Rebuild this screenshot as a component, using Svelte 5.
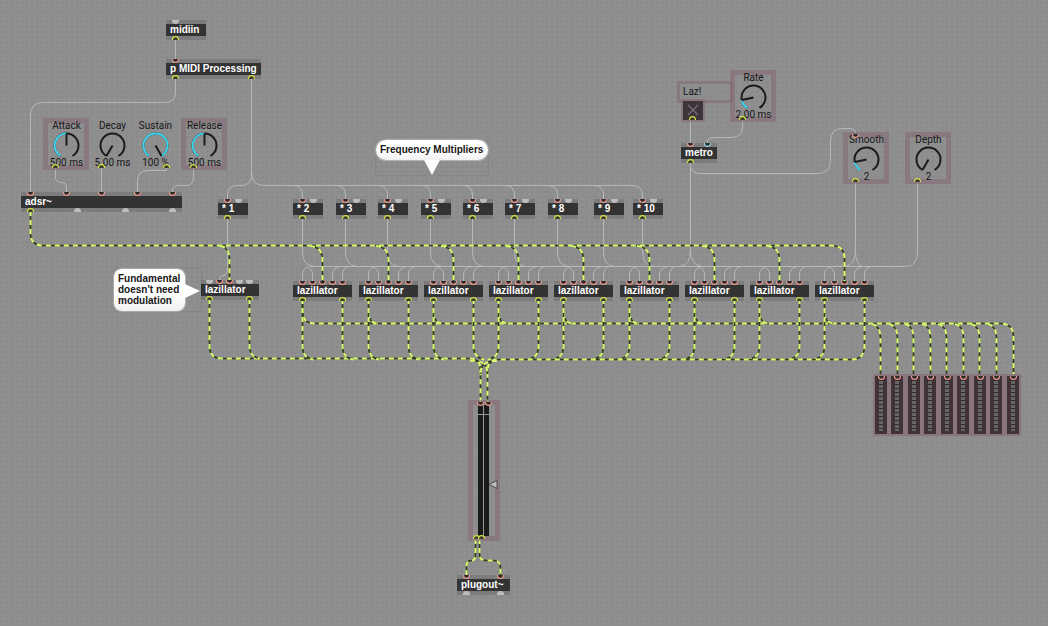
<script>
  const lazX = [293, 359, 424, 489, 554, 620, 685, 750, 815];
  const mults = [
    { x: 218, n: 1 }, { x: 293, n: 2 }, { x: 336, n: 3 }, { x: 378, n: 4 }, { x: 421, n: 5 },
    { x: 463, n: 6 }, { x: 505, n: 7 }, { x: 548, n: 8 }, { x: 594, n: 9 }, { x: 633, n: 10 }
  ];

  // Port kinds: r = hot inlet, b = cold inlet, g = unused, y = outlet in use
  const objects = [
    { label: 'midiin', x: 166, y: 20, w: 40, ins: [[9, 'g']], outs: [[9, 'y']] },
    { label: 'p MIDI Processing', x: 166, y: 59, w: 95, ins: [[9, 'r']], outs: [[9, 'y'], [85, 'y']] },
    { label: 'adsr~', x: 21, y: 192, w: 161,
      ins: [[9, 'r'], [45, 'r'], [80, 'r'], [116, 'r'], [151, 'r']],
      outs: [[9, 'y'], [56, 'g'], [104, 'g'], [151, 'g']] },
    ...mults.map((m) => ({ label: `* ${m.n}`, x: m.x, y: 199, w: 30, ins: [[9, 'r'], [20, 'g']], outs: [[9, 'y']] })),
    { label: 'lazillator', x: 201, y: 280, w: 58,
      ins: [[8, 'g'], [18, 'r'], [28, 'r'], [38, 'g'], [48, 'g']], outs: [[8, 'y'], [48, 'y']] },
    ...lazX.map((x) => ({ label: 'lazillator', x, y: 281, w: 59,
      ins: [9, 19, 29, 39, 49].map((d) => [d, 'r']), outs: [[9, 'y'], [49, 'y']] })),
    { label: 'metro', x: 681, y: 143, w: 36, ins: [[9, 'r'], [26, 'b']], outs: [[9, 'y']] },
    { label: 'plugout~', x: 457, y: 575, w: 53, ins: [[9, 'r'], [43, 'r']], outs: [[9, 'g'], [43, 'g']] }
  ];

  const dials = [
    { name: 'Attack', value: '500 ms', x: 43, y: 118, framed: true, angle: 0, port: 12 },
    { name: 'Decay', value: '5.00 ms', x: 89, y: 118, framed: false, angle: -150, port: 12 },
    { name: 'Sustain', value: '100 %', x: 132, y: 118, framed: false, angle: 150, port: 34 },
    { name: 'Release', value: '500 ms', x: 181, y: 118, framed: true, angle: 0, port: 12 },
    { name: 'Rate', value: '2.00 ms', x: 730, y: 70, framed: true, angle: -102, port: 12 },
    { name: 'Smooth', value: '2', x: 843, y: 132, framed: true, angle: -102, port: 12 },
    { name: 'Depth', value: '2', x: 905, y: 132, framed: true, angle: -150, port: 12 }
  ];

  const meters = [875, 891, 908, 924, 941, 957, 974, 990, 1007];
  const meterWire = [880, 897, 913, 930, 946, 963, 979, 996, 1013];

  function polar(angle, r) {
    const a = (angle * Math.PI) / 180;
    return [23.5 + r * Math.sin(a), 27.5 - r * Math.cos(a)];
  }
  function arc(from, to) {
    const [x1, y1] = polar(from, 12);
    const [x2, y2] = polar(to, 12);
    return `M${x1} ${y1}A12 12 0 ${to - from > 180 ? 1 : 0} 1 ${x2} ${y2}`;
  }

  const control = [
    'M175.5 39V60',
    'M175.5 77V92Q175.5 102.500 165 102.500H43Q30.500 102.500 30.500 115V193',
    'M251.500 77V175Q251.500 185.500 241 185.500H238Q227.500 185.500 227.500 194V200',
    'M251.500 172Q251.500 185.500 264 185.500H632Q642.500 185.500 642.500 195V200',
    'M55.500 168V177Q55.500 182.500 61 182.500Q66.500 182.500 66.500 188V193',
    'M101.500 168V193',
    'M166.500 168V170.500H149Q137.500 170.500 137.500 181V193',
    'M193.500 168V177Q193.500 185.500 186 185.500H178Q172.500 185.500 172.500 190V193',
    'M227.500 217V268Q227.500 275.500 223 275.500Q219.500 275.500 219.500 281',
    ...mults.slice(1, 9).map((m) => `M${m.x} 185.500Q${m.x + 9.5} 185.500 ${m.x + 9.5} 195V200`),
    ...mults.slice(1).map((m) => `M${m.x + 9.5} 217V252Q${m.x + 9.5} 265.500 ${m.x + 21} 266.500`),
    'M310 266.500H905Q917.500 266.500 917.500 252V182',
    'M690.500 160V250Q690.500 265 702 266.500',
    'M690.500 250Q690.500 265 680 266.500',
    'M690.500 166Q691 173.500 700 173.500H818Q830.500 173.500 830.500 160V141Q830.500 128.500 843 128.500H850Q855.500 128.500 855.500 134',
    'M855.500 182V250Q855.500 265 845 266.500',
    'M855.500 250Q855.500 265 862 266.500',
    'M690.500 121V144',
    'M742.500 120V127Q742.500 137.500 731 137.500H715Q707.500 137.500 707.500 141V144',
    ...lazX.flatMap((x) => [
      `M${x + 9.5} 282V275Q${x + 9.5} 268.500 ${x + 14.5} 267.500`,
      `M${x + 19.5} 282V275Q${x + 19.5} 268.500 ${x + 14.5} 267.500`,
      `M${x + 39.5} 282V275Q${x + 39.5} 267.500 ${x + 48} 266.500`,
      `M${x + 49.5} 282V275Q${x + 49.5} 267.500 ${x + 56} 266.500`
    ])
  ];

  const signal = [
    'M30.500 211V233Q30.500 245.500 43 245.500H831Q844.500 245.500 844.500 259V283',
    'M220 246Q229.500 247 229.500 260V282',
    ...lazX.slice(0, 8).map((x) => `M${x + 17} 246Q${x + 29.5} 247 ${x + 29.5} 260V283`),
    'M302.500 299V311Q302.500 323.500 315 323.500H1000Q1013.500 323.500 1013.500 337V376',
    ...lazX.slice(1).map((x) => `M${x + 9.5} 313Q${x + 10} 322 ${x + 18} 323.500`),
    ...meterWire.slice(0, 8).map((x) => `M${x - 8} 324Q${x + 0.5} 326 ${x + 0.5} 338V376`),
    'M209.500 299V346Q209.500 358.500 222 358.500H470Q480.500 359 480.500 370V403',
    'M249.500 299V346Q249.500 357 260 358.500',
    ...lazX.flatMap((x) => [x + 9.5, x + 49.5]).slice(0, 17)
      .map((x) => `M${x} 299V346Q${x} 358 ${x + (x < 480 ? 11 : -11)} 359.500`),
    'M864.500 299V346Q864.500 359.500 851 359.500H498Q487.500 360 487.500 371V403',
    'M470 361Q487.500 359 487.500 374',
    'M497 361Q480.500 360 480.500 374',
    'M475.500 539V555Q475.500 560.500 471 560.500Q466.500 561 466.500 566V577',
    'M479.500 539V555Q479.500 560.500 487 560.500H494Q500.500 561 500.500 568V577'
  ];

  const ports = [
    ...objects.flatMap((o) => [
      ...o.ins.map(([d, k]) => ({ x: o.x + d + 0.5, y: o.y, k, dir: 'in' })),
      ...o.outs.map(([d, k]) => ({ x: o.x + d + 0.5, y: o.y + 20, k, dir: 'out' }))
    ]),
    ...dials.map((d) => ({ x: d.x + d.port + 0.5, y: d.y + 50, k: 'y', dir: 'out' })),
    { x: 692.5, y: 120, k: 'y', dir: 'out' },
    { x: 855.5, y: 134, k: 'r', dir: 'in' },
    { x: 480.5, y: 402, k: 'r', dir: 'in' },
    { x: 488.5, y: 402, k: 'r', dir: 'in' },
    { x: 476.5, y: 539, k: 'y', dir: 'out' },
    { x: 481.5, y: 539, k: 'y', dir: 'out' },
    ...meters.map((x) => ({ x: x + 6.5, y: 376, k: 'r', dir: 'in' }))
  ];

  function portPath(p) {
    const dy = p.dir === 'in' ? 1 : -1;
    return `M${p.x - 3} ${p.y}C${p.x - 3} ${p.y + dy * 4.4} ${p.x + 3} ${p.y + dy * 4.4} ${p.x + 3} ${p.y}`;
  }

  let armed = $state(true);
</script>

<main class="patcher">
  <svg class="layer" aria-hidden="true">
    {#each control as d}<path class="control" {d} />{/each}
    {#each signal as d}
      <path class="signal" {d} />
      <path class="signal-dash" {d} />
    {/each}
  </svg>

  {#each objects as o}
    <div class="object" style="left:{o.x}px;top:{o.y}px;width:{o.w}px"><span>{o.label}</span></div>
  {/each}

  {#each dials as d}
    <label class="dial" class:framed={d.framed} style="left:{d.x}px;top:{d.y}px">
      <span class="name">{d.name}</span>
      <span class="value">{d.value}</span>
      <svg class="knob" viewBox="0 0 46 52" aria-hidden="true">
        <path class="track" d={arc(-150, 150)} />
        {#if d.angle > -150}<path class="fill" d={arc(-150, d.angle)} />{/if}
        <path class="track" d="M23.5 27.5L{polar(d.angle, 12).join(' ')}" />
      </svg>
      <input type="range" min="-150" max="150" value={d.angle} />
    </label>
  {/each}

  <label class="laz" for="laz">Laz!</label>
  <div class="toggle">
    <input id="laz" type="checkbox" bind:checked={armed} />
    <svg viewBox="0 0 20 19" aria-hidden="true"><path d="M5 4L15 14M15 4L5 14" /></svg>
  </div>

  <div class="comment side">
    <p>Fundamental<br />doesn't need<br />modulation</p>
    <svg class="tail" viewBox="0 0 15 14" aria-hidden="true"><path d="M0 0L15 7L0 14Z" /></svg>
  </div>
  <div class="comment top">
    <p>Frequency Multipliers</p>
    <svg class="tail" viewBox="0 0 16 15" aria-hidden="true"><path d="M0 0H16L8 15Z" /></svg>
  </div>

  <div class="gain">
    <div class="bar"></div>
    <div class="bar"></div>
    <svg class="pointer" viewBox="0 0 10 9" aria-hidden="true"><path d="M9 0.500L1 4.500L9 8.500Z" /></svg>
    <input type="range" aria-label="Gain" value="40" />
  </div>

  <div class="meters">
    {#each meters as x}
      <div class="meter" style="left:{x - 873}px"></div>
    {/each}
  </div>

  <svg class="layer" aria-hidden="true">
    {#each ports as p}<path class="port {p.k}" d={portPath(p)} />{/each}
  </svg>
</main>

<style>
  :global(body) { margin: 0; background: #8e8e8e; }
  .patcher {
    position: relative;
    min-height: 100vh;
    overflow: hidden;
    background-color: #8f8f8f;
    background-image: radial-gradient(circle at 2px 2px, #808080 0, #8d8d8d 1px, transparent 2px);
    background-size: 5px 5px;
    font-family: "Liberation Sans", Arial, sans-serif;
    font-size: 10px;
    color: #161616;
  }
  .layer { position: absolute; inset: 0; width: 100%; height: 100%; pointer-events: none; fill: none; }
  .control { stroke: #b8b8b8; stroke-width: 1; }
  .signal { stroke: #343c1c; stroke-width: 1.6; }
  .signal-dash { stroke: #d8fb70; stroke-width: 2; stroke-dasharray: 5 4; }

  .object {
    position: absolute;
    box-sizing: border-box;
    border: solid #7c7c7c;
    border-width: 4px 0;
    background: #333;
    color: #fff;
    font-weight: bold;
    line-height: 12px;
    padding-left: 4px;
    white-space: pre;
  }
  .object span { display: block; }

  .port { stroke-width: 1.2; }
  .r { fill: #2b2b2b; stroke: #ee978b; }
  .b { fill: #2b2b2b; stroke: #8ed3e6; }
  .y { fill: #3c3c30; stroke: #d6e344; }
  .g { fill: #bdbdbd; stroke: #bdbdbd; }

  .dial { position: absolute; width: 46px; height: 52px; font-family: Roboto, sans-serif; }
  .framed::before {
    content: "";
    position: absolute;
    inset: 0;
    border: 5px solid rgba(135, 105, 118, 0.6);
  }
  .dial span { position: absolute; left: 1px; right: 0; line-height: 12px; text-align: center; white-space: nowrap; }
  .name { top: 2px; }
  .value { bottom: 1px; }
  .knob { position: absolute; inset: 0; fill: none; stroke-width: 2; }
  .track { stroke: #1a1a1a; }
  .fill { stroke: #3fd6f0; }
  input[type="range"] { position: absolute; inset: 0; width: 100%; height: 100%; margin: 0; opacity: 0; }

  .laz {
    position: absolute;
    left: 677px;
    top: 81px;
    width: 44px;
    padding: 1px 3px;
    border: 3px solid rgba(135, 105, 118, 0.6);
    font-family: Roboto, sans-serif;
    line-height: 14px;
  }
  .toggle { position: absolute; left: 683px; top: 101px; width: 20px; height: 19px; background: #3e3439; outline: 2px solid rgba(135, 105, 118, 0.6); }
  .toggle input { position: absolute; inset: 0; margin: 0; width: 100%; height: 100%; opacity: 0; }
  .toggle svg { display: block; fill: none; stroke: #77717a; stroke-width: 1.3; }

  .comment { position: absolute; font-weight: bold; outline: 1px solid rgba(0, 0, 0, 0.05); }
  .comment p { margin: 0; background: linear-gradient(#fff 60%, #f0f0f0); border-radius: 8px; box-shadow: 0 0 1px 1px rgba(225, 225, 225, 0.5); }
  .tail { position: absolute; fill: #fff; }
  .side { left: 114px; top: 269px; width: 87px; }
  .side p { width: 67px; padding: 4px 0 5px 4px; line-height: 11px; }
  .side .tail { left: 71px; top: 15px; width: 15px; }
  .top { left: 376px; top: 140px; width: 112px; height: 35px; }
  .top p { padding: 4px; line-height: 12px; border-radius: 10px; }
  .top .tail { left: 48px; top: 20px; width: 16px; }

  .gain {
    position: absolute;
    left: 468px;
    top: 400px;
    box-sizing: border-box;
    width: 32px;
    height: 141px;
    display: flex;
    gap: 1px;
    padding-left: 5px;
    border: 5px solid rgba(135, 105, 118, 0.6);
  }
  .bar { width: 5px; background: linear-gradient(#1a1a1a 9px, #999 9px, #999 10px, #1a1a1a 10px); box-shadow: 1px 0 #999; }
  .bar + .bar { box-shadow: none; }
  .pointer { position: absolute; left: 15px; top: 75px; width: 10px; fill: #bdbdbd; stroke: #4d4648; }

  .meters { position: absolute; left: 873px; top: 374px; width: 148px; height: 62px; background: #8a757d; }
  .meter {
    position: absolute;
    top: 2px;
    bottom: 2px;
    width: 4px;
    border: solid #403338;
    border-width: 4px 4px 3px;
    background: repeating-linear-gradient(#352c30 0, #352c30 1px, #666 1px, #666 4px);
  }
</style>
